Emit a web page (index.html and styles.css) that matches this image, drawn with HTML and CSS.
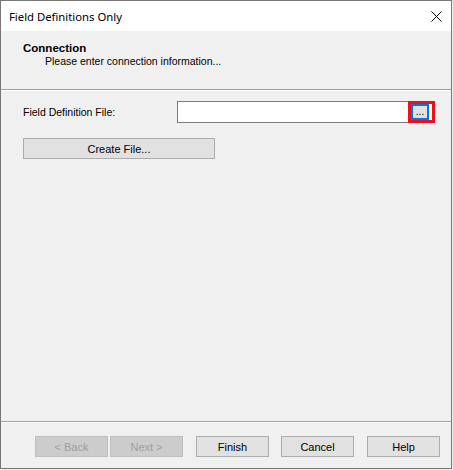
FILE: index.html
```html
<!DOCTYPE html>
<html>
<head>
<meta charset="utf-8">
<link rel="stylesheet" href="styles.css">
</head>
<body>
<div class="window">
  <div class="titlebar">
    <span class="title">Field Definitions Only</span>
    <svg class="close" width="11" height="11" viewBox="0 0 11 11"><path d="M0.5 0.5 L10.5 10.5 M10.5 0.5 L0.5 10.5" stroke="#000" stroke-width="1" fill="none"/></svg>
  </div>
  <div class="header">
    <div class="h-title">Connection</div>
    <div class="h-sub">Please enter connection information...</div>
  </div>
  <div class="sep"></div>
  <div class="content">
    <div class="row">
      <span class="label">Field Definition File:</span>
      <div class="textbox">
        <div class="browse">...</div>
        <div class="highlight"></div>
      </div>
    </div>
    <button class="btn wide">Create File...</button>
  </div>
  <div class="sep"></div>
  <div class="footer">
    <button class="btn disabled">&lt; Back</button>
    <button class="btn disabled">Next &gt;</button>
    <button class="btn gap">Finish</button>
    <button class="btn gap2">Cancel</button>
    <button class="btn gap3">Help</button>
  </div>
</div>
</body>
</html>
```
FILE: styles.css
```css
html, body { margin: 0; padding: 0; background: #f0f0f0; }
body { width: 453px; height: 470px; overflow: hidden; }
.window {
  width: 452px; height: 469px; box-sizing: border-box;
  border: 1px solid #777;
  background: #f0f0f0;
  display: flex; flex-direction: column;
  font-family: "Liberation Sans", Arial, sans-serif;
  font-size: 10.5px; color: #000;
}
.titlebar {
  height: 30px; background: #fff;
  display: flex; align-items: center;
  padding-left: 8px; padding-right: 9px;
}
.title { font-family: "Noto Sans", "Open Sans", sans-serif; font-size: 11.3px; flex: 1; }
.close { display: block; }
.header { height: 58px; box-sizing: border-box; padding: 10px 0 0 22px; }
.h-title { font-weight: bold; font-size: 11.5px; line-height: 14px; }
.h-sub { padding-left: 22px; line-height: 13px; margin-top: 0; }
.sep { height: 1px; background: #a0a0a0; border-bottom: 1px solid #fff; }
.content { flex: 1; padding: 10px 0 0 22px; }
.row { display: flex; align-items: center; height: 22px; }
.label { width: 154px; }
.textbox {
  position: relative;
  width: 256px; height: 22px; box-sizing: border-box;
  border: 1px solid #7a7a7a; background: #fff;
  display: flex; justify-content: flex-end; align-items: stretch;
}
.browse {
  width: 18px; margin: 2px 3px 2px 0; box-sizing: border-box;
  border: 2px solid #0078d7; background: #e1e1e1;
  font-size: 10px; line-height: 11px; text-align: center; color: #000;
}
.highlight {
  position: absolute; right: -3px; top: -1px;
  width: 27px; height: 22px; box-sizing: border-box;
  border: 3px solid #e81123;
}
.btn {
  font-family: "Liberation Sans", Arial, sans-serif; font-size: 11px;
  height: 21px; box-sizing: border-box;
  background: #e1e1e1; border: 1px solid #adadad; color: #000;
  padding: 0; margin: 0;
}
.wide { display: block; width: 192px; margin-top: 15px; }
.footer {
  height: 45px; box-sizing: border-box;
  padding: 13px 0 0 34px;
  display: flex; align-items: flex-start;
}
.footer .btn { width: 73px; margin-right: 2px; }
.footer .disabled { background: #cccccc; border-color: #bfbfbf; color: #a0a0a0; }
.footer .gap { margin-left: 11px; margin-right: 12px; }
.footer .gap2 { margin-right: 13px; }
```
